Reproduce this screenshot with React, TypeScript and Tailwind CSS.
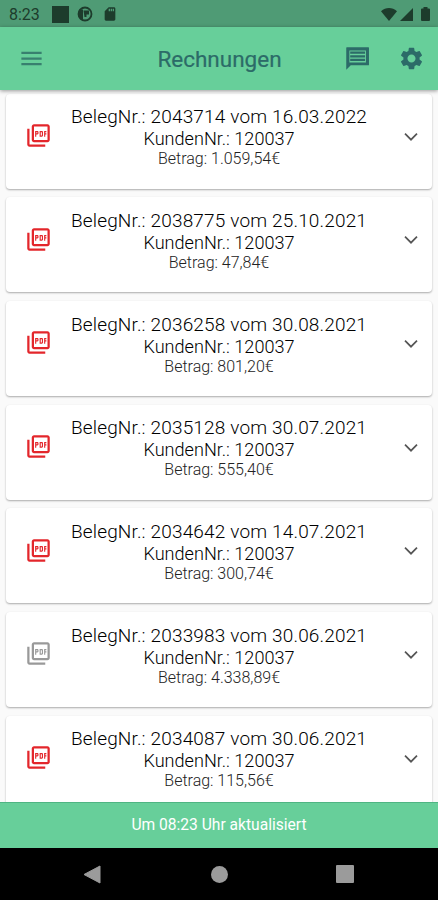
import {
  MdMenu,
  MdOutlinePictureAsPdf,
  MdSdCard,
  MdSettings,
} from "react-icons/md";
import { clsx } from "clsx";

interface Invoice {
  number: string;
  date: string;
  customer: string;
  amount: string;
  unavailable?: boolean;
}

const invoices: Invoice[] = [
  { number: "2043714", date: "16.03.2022", customer: "120037", amount: "1.059,54€" },
  { number: "2038775", date: "25.10.2021", customer: "120037", amount: "47,84€" },
  { number: "2036258", date: "30.08.2021", customer: "120037", amount: "801,20€" },
  { number: "2035128", date: "30.07.2021", customer: "120037", amount: "555,40€" },
  { number: "2034642", date: "14.07.2021", customer: "120037", amount: "300,74€" },
  { number: "2033983", date: "30.06.2021", customer: "120037", amount: "4.338,89€", unavailable: true },
  { number: "2034087", date: "30.06.2021", customer: "120037", amount: "115,56€" },
];

function StatusBar() {
  return (
    <div className="flex h-[27px] shrink-0 items-center bg-[#4f9b75] pl-[9px] pr-[8px] pt-[1px] text-[#1d3c2c]">
      <span className="w-[43px] pt-[1px] text-[16px] leading-none">8:23</span>
      <div className="size-[17px] bg-[#1d3c2c]" />
      <svg className="ml-[8px] size-4" viewBox="0 0 16 16">
        <circle cx="8" cy="8" r="6.5" fill="none" stroke="currentColor" strokeWidth="1.8" />
        <path d="M2 3.500h4v10L4 14 1.500 10zM6.500 4.500H12V8.500H9.500V11H7.500z" fill="currentColor" />
      </svg>
      <MdSdCard className="ml-[9px] size-4" />
      <svg className="ml-auto h-[13px] w-4" viewBox="0 0 16 13">
        <path d="M0 3.200C4.800-1 11.200-1 16 3.200L8 13z" fill="currentColor" />
      </svg>
      <svg className="ml-[3px] size-[13px]" viewBox="0 0 13 13">
        <path d="M13 0v13H0z" fill="currentColor" />
      </svg>
      <svg className="ml-[8px] h-[14px] w-[9px]" viewBox="0 0 9 14">
        <path d="M2.500 0h4v1.500H8q1 0 1 1V13q0 1-1 1H1q-1 0-1-1V2.500q0-1 1-1h1.500z" fill="currentColor" />
      </svg>
    </div>
  );
}

function MessageIcon() {
  return (
    <svg className="mr-[27px] size-[27px]" viewBox="0 0 24 24" fill="currentColor">
      <path
        d="M2.500 2h19.200q.5 0 .5.500v15q0 .5-.5.500H6l-4 4V2.500q0-.5.500-.5zM4.800 4.800v10.700h14.700V4.800z"
        fillRule="evenodd"
      />
      <path d="M5.500 5.800h13.200v2H5.500zM5.500 9h13.200v2H5.500zM5.500 12.200h13.200v2H5.500z" />
    </svg>
  );
}

function Header() {
  return (
    <header className="z-10 flex h-[63px] shrink-0 items-center bg-[#67cf9a] pl-[18px] pr-[13px] text-[#2c6b68] shadow-[0_1px_4px_rgba(0,0,0,0.4)]">
      <MdMenu className="size-[27px] text-[#38806f]" />
      <h1 className="flex-1 pl-[50px] pt-[2px] text-center text-[22.500px] font-normal [-webkit-text-stroke:0.2px]">
        Rechnungen
      </h1>
      <MessageIcon />
      <MdSettings className="size-[27px]" />
    </header>
  );
}

function InvoiceCard({ invoice }: { invoice: Invoice }) {
  return (
    <article className="flex h-[95px] shrink-0 items-start rounded-[4px] bg-white pl-[19px] pr-[13px] shadow-[0_1px_2px_rgba(0,0,0,0.32)]">
      <MdOutlinePictureAsPdf
        className={clsx("mt-[28.500px] size-[27px] shrink-0", invoice.unavailable ? "text-[#999999]" : "text-[#e3262b]")}
      />
      <div className="flex-1 pr-[17px] pt-[12.700px] text-center">
        <p className="text-[19px] font-light leading-[22px] tracking-[0.16px] text-black">
          BelegNr.: {invoice.number} vom {invoice.date}
        </p>
        <p className="text-[18.100px] font-light leading-[21px] text-black">KundenNr.: {invoice.customer}</p>
        <p className="text-[16px] font-light leading-[19px] text-[#222222]">Betrag: {invoice.amount}</p>
      </div>
      <svg
        className="mt-[38px] h-[10px] w-[16px] shrink-0 text-[#555555]"
        viewBox="0 0 16 10"
        fill="none"
        stroke="currentColor"
        strokeWidth="1.700"
      >
        <path d="M2 1.700l6 6 6-6" />
      </svg>
    </article>
  );
}

function NavigationBar() {
  return (
    <nav className="flex h-[52px] shrink-0 items-center justify-between bg-black pl-[83px] pr-[84px] text-[#9b9b9b]">
      <svg className="h-[19px] w-[18px]" viewBox="0 0 18 19">
        <path d="M17 1v17L1 9.500z" fill="currentColor" stroke="currentColor" strokeLinejoin="round" />
      </svg>
      <div className="ml-[2px] size-[17px] rounded-full bg-[#9b9b9b]" />
      <div className="size-[18px] rounded-[1px] bg-[#9b9b9b]" />
    </nav>
  );
}

export default function App() {
  return (
    <div className="flex h-[900px] w-[438px] flex-col overflow-hidden bg-[#fafafa] font-['Roboto',sans-serif]">
      <StatusBar />
      <Header />
      <main className="flex min-h-0 flex-1 flex-col gap-[8.700px] overflow-hidden px-[6px] pt-[3.500px]">
        {invoices.map((invoice) => (
          <InvoiceCard key={invoice.number} invoice={invoice} />
        ))}
      </main>
      <div className="flex h-[46px] shrink-0 items-center justify-center border-t border-[#4fb583] bg-[#67cf9a] text-[15.600px] text-white">
        Um 08:23 Uhr aktualisiert
      </div>
      <NavigationBar />
    </div>
  );
}
